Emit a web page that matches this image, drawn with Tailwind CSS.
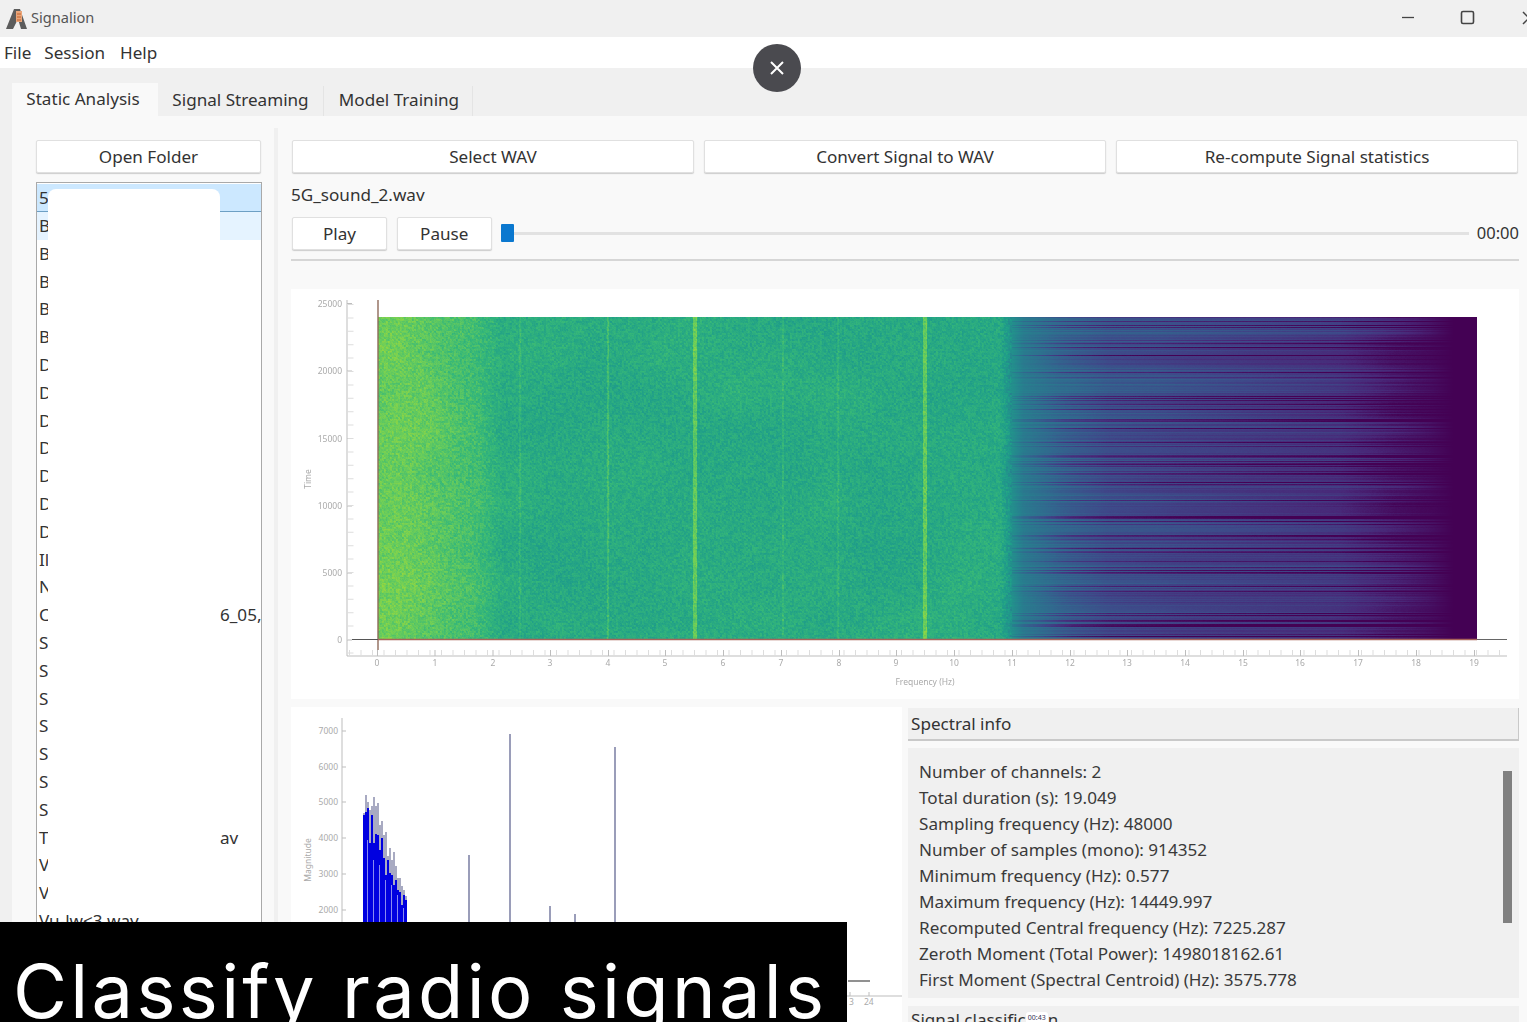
<!DOCTYPE html>
<html>
<head>
<meta charset="utf-8">
<script src="https://cdn.jsdelivr.net/npm/@tailwindcss/browser@4"></script>
</head>
<body>
<div class="relative w-[1527px] h-[1022px] overflow-hidden bg-[#f0f0f0] flex flex-col font-['Noto_Sans',sans-serif] text-[#333] text-[17.1px]">
  <!-- title bar -->
  <div class="h-[37px] flex items-center shrink-0 relative">
    <svg class="ml-[6px] w-[22px] h-[22px]" viewBox="0 0 22 22"><path d="M0 21 L8 1 H14 L21 21 H15 L12 11 L7 21 Z" fill="#5c5c5c"/><rect x="10" y="3" width="6" height="11" fill="#e9a57a"/><path d="M11 6h4M11 9h4M11 12h4" stroke="#c4622c" stroke-width="1"/></svg>
    <span class="ml-[3px] -mt-[2px] text-[14.6px] text-[#555]">Signalion</span>
    <svg class="absolute left-[1395px] top-[6px] w-[132px] h-[24px]" viewBox="0 0 132 24" fill="none" stroke="#444"><path d="M7 11.500H19" stroke-width="1.300"/><rect x="66.500" y="5.500" width="12" height="12" rx="1.500" stroke-width="1.600"/><path d="M128 6L134 12L128 18" stroke-width="1.500"/></svg>
  </div>
  <!-- menu -->
  <div class="h-[31px] bg-white shrink-0 flex items-center gap-[13px] pl-[4px]">
    <span>File</span><span>Session</span><span class="ml-[2px]">Help</span>
  </div>
  <!-- tabs -->
  <div class="h-[48px] shrink-0 flex items-end pl-3">
    <div class="w-[146px] h-[33px] bg-[#f9f9f9] flex items-center justify-center pr-[4px] pb-[2px]">Static Analysis</div>
    <div class="w-[166px] h-[30px] border-r border-[#e4e4e4] flex items-center justify-center pb-[2px]">Signal Streaming</div>
    <div class="w-[149px] h-[30px] border-r border-[#e4e4e4] flex items-center justify-center pl-[2px] pb-[2px]">Model Training</div>
  </div>
  <!-- content -->
  <div class="flex-1 ml-3 bg-[#f9f9f9] flex pt-3 min-h-0">
    <!-- left column -->
    <div class="ml-6 w-[226px] pt-3 flex flex-col shrink-0 relative">
      <button class="h-[33px] w-[225px] bg-white border border-[#e0e0e0] shadow-[0_1px_1px_#ccc] rounded-[2px]">Open Folder</button>
      <div class="mt-[9px] flex-1 bg-white border border-[#a9a9a9] pt-px overflow-hidden relative leading-[27px]">
        <div class="h-[28px] bg-[#cce8ff] border-b border-[#6d9fc4] pl-[2px]">5</div>
        <div class="h-[27.8px] bg-[#e5f3ff] pl-[2px]">B</div>
        <div class="h-[27.8px] pl-[2px]">B</div>
        <div class="h-[27.8px] pl-[2px]">B</div>
        <div class="h-[27.8px] pl-[2px]">B</div>
        <div class="h-[27.8px] pl-[2px]">B</div>
        <div class="h-[27.8px] pl-[2px]">D</div>
        <div class="h-[27.8px] pl-[2px]">D</div>
        <div class="h-[27.8px] pl-[2px]">D</div>
        <div class="h-[27.8px] pl-[2px]">D</div>
        <div class="h-[27.8px] pl-[2px]">D</div>
        <div class="h-[27.8px] pl-[2px]">D</div>
        <div class="h-[27.8px] pl-[2px]">D</div>
        <div class="h-[27.8px] pl-[2px]">Il</div>
        <div class="h-[27.8px] pl-[2px]">N</div>
        <div class="h-[27.8px] pl-[2px] flex justify-between"><span>C</span><span class="w-[41px]">6_05,</span></div>
        <div class="h-[27.8px] pl-[2px]">S</div>
        <div class="h-[27.8px] pl-[2px]">S</div>
        <div class="h-[27.8px] pl-[2px]">S</div>
        <div class="h-[27.8px] pl-[2px]">S</div>
        <div class="h-[27.8px] pl-[2px]">S</div>
        <div class="h-[27.8px] pl-[2px]">S</div>
        <div class="h-[27.8px] pl-[2px]">S</div>
        <div class="h-[27.8px] pl-[2px] flex justify-between"><span>T</span><span class="w-[41px]">av</span></div>
        <div class="h-[27.8px] pl-[2px]">V</div>
        <div class="h-[27.8px] pl-[2px]">V</div>
        <div class="h-[27.8px] pl-[2px]">Vu-lw&lt;3 wav</div>
        <div class="absolute left-[11px] top-[6px] w-[172px] h-[724px] bg-white rounded-t-[8px]"></div>
      </div>
    </div>
    <!-- splitter -->
    <div class="ml-[12px] w-[4px] bg-[#f0f0f0] shrink-0"></div>
    <!-- right column -->
    <div class="ml-[13px] w-[1228px] pt-3 flex flex-col min-h-0 shrink-0">
      <div class="flex gap-[10px] pl-px">
        <button class="h-[33px] w-[402px] bg-white border border-[#e0e0e0] shadow-[0_1px_1px_#ccc] rounded-[2px]">Select WAV</button>
        <button class="h-[33px] w-[402px] bg-white border border-[#e0e0e0] shadow-[0_1px_1px_#ccc] rounded-[2px]">Convert Signal to WAV</button>
        <button class="h-[33px] w-[402px] bg-white border border-[#e0e0e0] shadow-[0_1px_1px_#ccc] rounded-[2px]">Re-compute Signal statistics</button>
      </div>
      <div class="h-[44px] flex items-center">5G_sound_2.wav</div>
      <div class="flex items-center h-[33px] pl-px">
        <button class="h-[33px] w-[95px] bg-white border border-[#e0e0e0] shadow-[0_1px_1px_#ccc] rounded-[2px]">Play</button>
        <button class="ml-[10px] h-[33px] w-[95px] bg-white border border-[#e0e0e0] shadow-[0_1px_1px_#ccc] rounded-[2px]">Pause</button>
        <div class="ml-[9px] w-[13px] h-[18px] bg-[#0b78cf] rounded-[1px] -mt-px"></div>
        <div class="w-[957px] h-[3px] bg-[#e2e2e2] -mt-px"></div>
        <div class="ml-[8px] -mt-px text-[16.5px]">00:00</div>
      </div>
      <div class="mt-[9px] h-[2px] bg-[#d6d6d6]"></div>
      <!-- spectrogram panel -->
      <div class="mt-[28px] h-[410px] bg-white relative shrink-0">
        <canvas id="spec" width="1099" height="322" class="absolute left-[87px] top-[28px] w-[1099px] h-[322px]"></canvas>
        <svg class="absolute inset-0 w-[1228px] h-[410px]" viewBox="291 289 1228 410" font-family="Noto Sans, sans-serif" font-size="8.500" fill="#aaa">
          <g stroke="#bdbdbd" fill="none">
            <path d="M347 300V656H1507"/>
            <path d="M347 303.500h5M347 371h5M347 438.500h5M347 506h5M347 573h5M347 640h5" />
            <path d="M347.500 304V656" stroke="#ddd" stroke-width="6" stroke-dasharray="1 12.400" transform="translate(3 0)"/>
            <path d="M349 653H1507" stroke="#ddd" stroke-width="6" stroke-dasharray="1 10.500"/>
            <path d="M377.500 656v-6M435 656v-6M493 656v-6M550.500 656v-6M608.500 656v-6M665.500 656v-6M723.500 656v-6M781.500 656v-6M839.500 656v-6M896.500 656v-6M954.500 656v-6M1012.500 656v-6M1070.500 656v-6M1127.500 656v-6M1185.500 656v-6M1243.500 656v-6M1300.500 656v-6M1358.500 656v-6M1416.500 656v-6M1474.500 656v-6"/>
          </g>
          <path d="M378 300V650" stroke="#8f6a5a" stroke-width="1.400"/>
          <path d="M352 639.500H378" stroke="#555" stroke-width="1"/>
          <path d="M378 639.500H1477" stroke="#a8635a" stroke-width="1.400"/>
          <path d="M1477 639.500H1507" stroke="#666" stroke-width="1"/>
          <g text-anchor="end">
            <text x="342" y="306.500">25000</text><text x="342" y="374">20000</text><text x="342" y="441.500">15000</text><text x="342" y="509">10000</text><text x="342" y="576">5000</text><text x="342" y="643">0</text>
          </g>
          <g text-anchor="middle">
            <text x="377" y="666">0</text><text x="435" y="666">1</text><text x="493" y="666">2</text><text x="550" y="666">3</text><text x="608" y="666">4</text><text x="665" y="666">5</text><text x="723" y="666">6</text><text x="781" y="666">7</text><text x="839" y="666">8</text><text x="896" y="666">9</text><text x="954" y="666">10</text><text x="1012" y="666">11</text><text x="1070" y="666">12</text><text x="1127" y="666">13</text><text x="1185" y="666">14</text><text x="1243" y="666">15</text><text x="1300" y="666">16</text><text x="1358" y="666">17</text><text x="1416" y="666">18</text><text x="1474" y="666">19</text>
            <text x="925" y="685">Frequency (Hz)</text>
            <text transform="translate(311 479) rotate(-90)">Time</text>
          </g>
        </svg>
      </div>
      <!-- lower area -->
      <div class="mt-2 flex gap-[6px] flex-1 min-h-0">
        <div class="w-[611px] bg-white relative shrink-0">
          <svg class="absolute inset-0 w-[611px] h-[315px]" viewBox="291 707 611 315" font-family="Noto Sans, sans-serif" font-size="8.500" fill="#aaa">
            <path d="M342 718V1000M342 731h4M342 767h4M342 802h4M342 838h4M342 874h4M342 910h4" stroke="#bdbdbd" fill="none"/>
            <g text-anchor="end"><text x="338" y="734">7000</text><text x="338" y="770">6000</text><text x="338" y="805">5000</text><text x="338" y="841">4000</text><text x="338" y="877">3000</text><text x="338" y="913">2000</text></g>
            <text transform="translate(311 860) rotate(-90)" text-anchor="middle">Magnitude</text>
            <path d="M364 925V813M366 925V795M368 925V802M370 925V810M372 925V806M374 925V797M376 925V806M378 925V803M380 925V825M382 925V821M384 925V835M386 925V832M388 925V856M390 925V848M392 925V860M394 925V852M396 925V866M398 925V878M400 925V878M402 925V886M404 925V890M406 925V896" stroke="#6f7299" stroke-width="1.200" fill="none"/>
            <g shape-rendering="crispEdges" fill="none">
              <path d="M364 925V815M366 925V812M368 925V808M370 925V843M372 925V815M374 925V843M376 925V834M378 925V835M380 925V850M382 925V838M384 925V858M386 925V875M388 925V860M390 925V873M392 925V875M394 925V885M396 925V880M398 925V890M400 925V892M402 925V905M404 925V895M406 925V900" stroke="#0000e0" stroke-width="2"/>
              <path d="M367 925V840M373 925V860M379 925V865M385 925V880M391 925V885M397 925V895M403 925V908" stroke="#8a8af0" stroke-width="1"/>
            </g>
            <path d="M469 925V855M510 925V734M550 925V906M575 925V914M615 925V747" stroke="#7a7da3" stroke-width="1.500" fill="none"/>
            <path d="M848 981H870" stroke="#555" stroke-width="1.300"/>
            <path d="M847 996H902M850 996v-4M869 996v-4" stroke="#bdbdbd" fill="none"/>
            <text x="849" y="1005">3</text><text x="864" y="1005">24</text>
          </svg>
        </div>
        <div class="flex-1 flex flex-col min-w-0 pt-px">
          <div class="h-[33px] shrink-0 bg-[#f0f0f0] border-b-2 border-r border-[#c9c9c9] pl-[3px] flex items-center">Spectral info</div>
          <div class="mt-[7px] h-[250px] shrink-0 bg-[#f0f0f0] relative pl-[11px] pt-[11px] leading-[26px] text-[#3a3a3a]">
            <div>Number of channels: 2</div>
            <div>Total duration (s): 19.049</div>
            <div>Sampling frequency (Hz): 48000</div>
            <div>Number of samples (mono): 914352</div>
            <div>Minimum frequency (Hz): 0.577</div>
            <div>Maximum frequency (Hz): 14449.997</div>
            <div>Recomputed Central frequency (Hz): 7225.287</div>
            <div>Zeroth Moment (Total Power): 1498018162.61</div>
            <div>First Moment (Spectral Centroid) (Hz): 3575.778</div>
            <div class="absolute left-[595px] top-[23px] w-[9px] h-[152px] bg-[#808080]"></div>
          </div>
          <div class="mt-2 flex-1 bg-[#f0f0f0] pl-[3px] pt-[1px] flex items-start overflow-hidden">
            <span>Signal classific</span><span class="mt-[5px] h-[12px] px-[2px] bg-white rounded-t-[3px] text-[7px] leading-[12px] text-[#335]">00:43</span><span>n</span>
          </div>
        </div>
      </div>
    </div>
  </div>
  <!-- video overlays -->
  <button class="absolute left-[753px] top-[44px] w-12 h-12 rounded-full bg-[#4a4a4f] flex items-center justify-center">
    <svg class="w-[14px] h-[14px]" viewBox="0 0 14 14" stroke="#fff" stroke-width="2" fill="none"><path d="M1 1L13 13M13 1L1 13"/></svg>
  </button>
  <div class="absolute left-0 top-[922px] w-[847px] h-[100px] bg-black text-white overflow-hidden">
    <div class="ml-[13px] mt-[19px] text-[74px] leading-[100px] tracking-[3.3px] font-normal whitespace-nowrap font-['Inter',sans-serif]">Classify radio signals</div>
  </div>
</div>
<script>
(function(){
  var c=document.getElementById('spec'),g=c.getContext('2d'),W=1099,H=322,im=g.createImageData(W,H),d=im.data;
  var s=12345;function r(){s=(s*1664525+1013904223)>>>0;return s/4294967296;}
  var st=[[68,1,84],[72,40,120],[62,73,137],[49,104,142],[38,130,142],[31,158,137],[53,183,121],[110,206,88],[181,222,43]];
  function col(v){v=Math.max(0,Math.min(.999,v))*8;var i=Math.floor(v),f=v-i,a=st[i],b=st[i+1];return [a[0]+(b[0]-a[0])*f,a[1]+(b[1]-a[1])*f,a[2]+(b[2]-a[2])*f];}
  var row=[],i,x,y;
  for(y=0;y<H;y++){var u=r();row[y]=u<.2?-(.08+r()*.12):(u<.45?-.03:(u>.85?.03:0));}
  var coarse=[];for(i=0;i<1500;i++)coarse[i]=r()-.5;
  function vn(x,y,sx,sy){var a=Math.floor(x/sx),b=Math.floor(y/sy),fx=x/sx-a,fy=y/sy-b;function q(m,n){return coarse[(m*37+n*61)%1500];}
    return q(a,b)*(1-fx)*(1-fy)+q(a+1,b)*fx*(1-fy)+q(a,b+1)*(1-fx)*fy+q(a+1,b+1)*fx*fy;}
  var grain=[];for(i=0;i<W*H;i++)grain[i]=r()-.5;
  function gr(x,y){var a=x&~1,b=y&~1;return .6*grain[b*W+a]+.4*grain[y*W+x];}
  var pts=[[0,.86],[25,.86],[95,.79],[125,.69],[622,.69],[634,.56],[645,.47],[680,.37],[730,.28],[800,.24],[960,.18],[1050,.05],[1075,0],[1099,0]];
  function base(x){for(var j=1;j<pts.length;j++){if(x<=pts[j][0]){var a=pts[j-1],b=pts[j];return a[1]+(b[1]-a[1])*(x-a[0])/(b[0]-a[0]);}}return 0;}
  var lines=[[142,.05,1.5],[230,.09,2],[317,.16,2.5],[405,.06,2],[460,.05,1.5],[547,.17,3]];
  for(y=0;y<H;y++)for(x=0;x<W;x++){
    var v=base(x);
    if(x<634){v+=gr(x,y)*.13+vn(x,y,45,38)*.05;
      for(i=0;i<6;i++){if(Math.abs(x+.5-lines[i][0])<lines[i][2]/2+.5)v+=lines[i][1];}
    } else if(x<1075){var amt=Math.min(1,(x-634)/60),fade=Math.min(1,v/.1);v+=(row[y]*(.4+amt*.8)+vn(x,y,260,14)*.13*amt+(r()-.5)*.015)*fade;}
    var p=col(v),k=(y*W+x)*4;d[k]=p[0];d[k+1]=p[1];d[k+2]=p[2];d[k+3]=255;
  }
  g.putImageData(im,0,0);
})();
</script>
</body>
</html>
